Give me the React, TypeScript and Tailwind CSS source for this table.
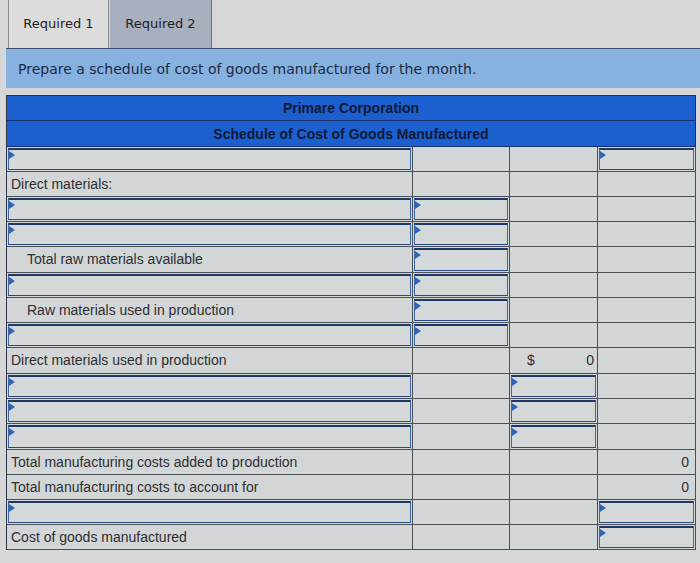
import React from "react";

type C = { kind: "none" } | { kind: "input" } | { kind: "text"; text: string; indent?: boolean } | { kind: "num"; text: string; dollar?: boolean };

const N: C = { kind: "none" };
const I: C = { kind: "input" };
const T = (text: string, indent = false): C => ({ kind: "text", text, indent });
const Num = (text: string, dollar = false): C => ({ kind: "num", text, dollar });

const rows: { h: string; cells: C[] }[] = [
  { h: "h-[25px]", cells: [I, N, N, I] },
  { h: "h-[25px]", cells: [T("Direct materials:"), N, N, N] },
  { h: "h-[25px]", cells: [I, I, N, N] },
  { h: "h-[25px]", cells: [I, I, N, N] },
  { h: "h-[26px]", cells: [T("Total raw materials available", true), I, N, N] },
  { h: "h-[25px]", cells: [I, I, N, N] },
  { h: "h-[25px]", cells: [T("Raw materials used in production", true), I, N, N] },
  { h: "h-[25px]", cells: [I, I, N, N] },
  { h: "h-[26px]", cells: [T("Direct materials used in production"), N, Num("0", true), N] },
  { h: "h-[25px]", cells: [I, N, I, N] },
  { h: "h-[25px]", cells: [I, N, I, N] },
  { h: "h-[26px]", cells: [I, N, I, N] },
  { h: "h-[25px]", cells: [T("Total manufacturing costs added to production"), N, N, Num("0")] },
  { h: "h-[25px]", cells: [T("Total manufacturing costs to account for"), N, N, Num("0")] },
  { h: "h-[25px]", cells: [I, N, N, I] },
  { h: "h-[25px]", cells: [T("Cost of goods manufactured"), N, N, I] },
];

const widths = ["w-[406px]", "w-[97px]", "w-[88px]", "w-[98px]"];

function InputBox() {
  return (
    <div className="relative h-full w-full border-t-2 border-b border-l border-r border-t-[#1d3766] border-b-[#2a4a80] border-l-[#3e67a8] border-r-[#3e67a8] bg-[#d5d8d9]">
      <div className="absolute left-0 top-[1px] h-0 w-0 border-y-[4px] border-l-[6px] border-y-transparent border-l-[#2d64b8]" />
    </div>
  );
}

function Cell({ c, w }: { c: C; w: string }) {
  return (
    <div className={`${w} h-full shrink-0 border-r border-[#4d4f52]`}>
      {c.kind === "input" && (
        <div className="h-full p-[1px]">
          <InputBox />
        </div>
      )}
      {c.kind === "text" && (
        <div className={`flex h-full items-center ${c.indent ? "pl-[20px]" : "pl-[4px]"} text-[14px] text-[#2e2f31]`}>
          {c.text}
        </div>
      )}
      {c.kind === "num" && (
        <div className={`flex h-full items-center justify-between ${c.dollar ? "px-[3px]" : "px-[6px]"} text-[14px] text-[#2e2f31]`}>
          <span className="pl-[14px]">{c.dollar ? "$" : ""}</span>
          <span className="pr-[0px]">{c.text}</span>
        </div>
      )}
    </div>
  );
}

export default function App() {
  return (
    <div className="h-[563px] w-[700px] overflow-hidden bg-[#d6d7d6]" style={{ fontFamily: "'Liberation Sans', Arial, sans-serif" }}>
      {/* tabs */}
      <div className="flex h-[48px] items-stretch pl-[8px]" style={{ fontFamily: "'DejaVu Sans', Verdana, sans-serif" }}>
        <div className="flex w-[101px] items-center justify-center border-x border-[#8c8c8c] bg-[#dcdcdb] text-[13px] text-[#222]">
          Required 1
        </div>
        <div className="ml-[1px] flex w-[102px] items-center justify-center border-r border-[#6f7480] bg-[#a8afbf] text-[13px] text-[#222]">
          Required 2
        </div>
      </div>
      {/* prompt */}
      <div className="ml-[6px] flex h-[40px] items-center border-t border-[#3b4d6a] bg-[#87b2e0] pl-[12px] pt-[2px] text-[14px] text-[#1b2a45]" style={{ fontFamily: "'DejaVu Sans', Verdana, sans-serif" }}>
        Prepare a schedule of cost of goods manufactured for the month.
      </div>
      {/* table */}
      <div className="ml-[6px] mt-[7px] w-[690px] border-l border-t border-[#2b3444]">
        <div className="flex h-[25px] items-center justify-center border-b border-r border-[#17306a] bg-[#1c5fcf] pt-[1px] text-[14px] font-bold text-[#0f1a38]">
          Primare Corporation
        </div>
        <div className="flex h-[26px] items-center justify-center border-b border-r border-[#17306a] bg-[#1c5fcf] pt-[1px] text-[14px] font-bold text-[#0f1a38]">
          Schedule of Cost of Goods Manufactured
        </div>
        {rows.map((r, i) => (
          <div key={i} className={`flex ${r.h} border-b border-[#4d4f52] bg-[#d3d6d7]`}>
            {r.cells.map((c, j) => (
              <Cell key={j} c={c} w={widths[j]} />
            ))}
          </div>
        ))}
      </div>
    </div>
  );
}
